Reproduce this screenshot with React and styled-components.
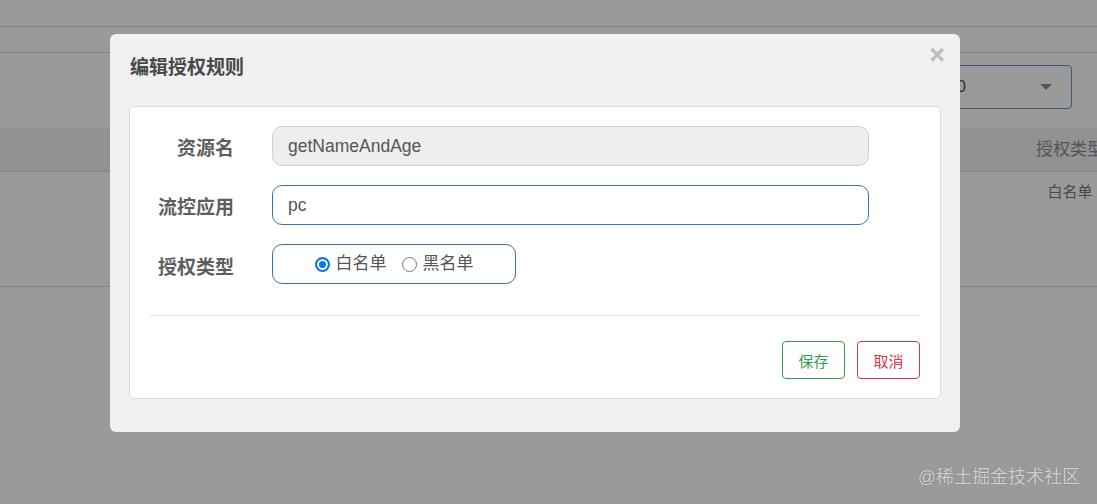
import React from 'react';
import styled, { createGlobalStyle } from 'styled-components';

const GlobalStyle = createGlobalStyle`
  html, body {
    margin: 0;
    padding: 0;
  }
  body {
    font-family: "Liberation Sans", "Noto Sans CJK SC", sans-serif;
    background: #fff;
    overflow: hidden;
  }
`;

const App = () => {
  return (
    <Page>
      <GlobalStyle />
      <TopBar />
      <SubBar />
      <FilterRow>
        <Select>
          <span>10</span>
          <Caret />
        </Select>
      </FilterRow>
      <TableHead>
        <Cell />
        <HeadCell>授权类型</HeadCell>
      </TableHead>
      <TableRow>
        <Cell />
        <RowCell>白名单</RowCell>
      </TableRow>

      <Overlay>
        <Modal>
          <Close>×</Close>
          <Title>编辑授权规则</Title>
          <Card>
            <Rows>
              <FormRow>
                <Label>资源名</Label>
                <Input disabled>getNameAndAge</Input>
              </FormRow>
              <FormRow>
                <Label>流控应用</Label>
                <Input>pc</Input>
              </FormRow>
              <FormRow>
                <Label $shift={2}>授权类型</Label>
                <RadioGroup>
                  <RadioOption>
                    <RadioDot $checked />
                    白名单
                  </RadioOption>
                  <RadioOption>
                    <RadioDot />
                    黑名单
                  </RadioOption>
                </RadioGroup>
              </FormRow>
            </Rows>
            <Divider />
            <Footer>
              <ActionButton $color="#2f9e4b">保存</ActionButton>
              <ActionButton $color="#d23a4b">取消</ActionButton>
            </Footer>
          </Card>
        </Modal>
        <Watermark>@稀土掘金技术社区</Watermark>
      </Overlay>
    </Page>
  );
};

const Page = styled.div`
  position: relative;
  width: 1097px;
  height: 504px;
  overflow: hidden;
  background: #fff;
`;

const TopBar = styled.div`
  height: 26px;
  border-bottom: 1px solid #d9d9d9;
`;

const SubBar = styled.div`
  height: 25px;
  border-bottom: 1px solid #d9d9d9;
`;

const FilterRow = styled.div`
  height: 75px;
  box-sizing: border-box;
  padding: 12px 25px 0 0;
  display: flex;
  justify-content: flex-end;
  align-items: flex-start;
`;

const Select = styled.div`
  width: 172px;
  height: 44px;
  box-sizing: border-box;
  border: 1px solid #6193c6;
  border-radius: 4px;
  display: flex;
  align-items: center;
  justify-content: space-between;
  padding: 0 19px 0 46px;
  font-size: 17px;
  color: #555;
`;

const Caret = styled.span`
  width: 0;
  height: 0;
  border-left: 6px solid transparent;
  border-right: 6px solid transparent;
  border-top: 6px solid #8f8f8f;
`;

const TableHead = styled.div`
  width: 1120px;
  height: 43px;
  background: #eef2f6;
  border-bottom: 1px solid #dcdcdc;
  display: grid;
  grid-template-columns: 1020px 100px;
  align-items: center;
`;

const TableRow = styled.div`
  width: 1120px;
  height: 114px;
  border-bottom: 1px solid #dcdcdc;
  display: grid;
  grid-template-columns: 1020px 100px;
  align-items: start;
`;

const Cell = styled.div``;

const HeadCell = styled.div`
  text-align: center;
  font-size: 17px;
  line-height: 24px;
  color: #8c8c8c;
  white-space: nowrap;
`;

const RowCell = styled.div`
  text-align: center;
  font-size: 15px;
  line-height: 20px;
  padding-top: 10px;
  color: #777;
`;

const Overlay = styled.div`
  position: absolute;
  inset: 0;
  background: rgba(0, 0, 0, 0.396);
`;

const Modal = styled.div`
  position: relative;
  width: 850px;
  box-sizing: border-box;
  margin: 34px 0 0 110px;
  padding: 21px 19px 33px 19px;
  background: #f0f0f0;
  border-radius: 6px;
`;

const Close = styled.div`
  position: absolute;
  top: 8px;
  right: 15px;
  font-family: "Liberation Sans", sans-serif;
  font-size: 27px;
  font-weight: bold;
  line-height: 1;
  color: #bdbdbd;
`;

const Title = styled.h4`
  margin: 0 0 25px 1px;
  font-size: 19px;
  line-height: 26px;
  font-weight: bold;
  color: #474747;
`;

const Card = styled.div`
  background: #fff;
  border: 1px solid #dcdcdc;
  border-radius: 5px;
  padding: 19px 20px;
`;

const Rows = styled.div`
  display: flex;
  flex-direction: column;
  gap: 19px;
`;

const FormRow = styled.div`
  display: flex;
  align-items: center;
  gap: 38px;
`;

const Label = styled.label`
  width: 84px;
  text-align: right;
  font-size: 19px;
  line-height: 26px;
  font-weight: bold;
  color: #5e5e5e;
  padding-top: ${props => 5 + (props.$shift || 0)}px;
`;

const Input = styled.div`
  width: 597px;
  height: 40px;
  box-sizing: border-box;
  padding: 0 15px;
  display: flex;
  align-items: center;
  border-radius: 10px;
  border: 1px solid ${props => (props.disabled ? '#cfcfcf' : '#3e72a5')};
  background: ${props => (props.disabled ? '#eeeeee' : '#fff')};
  font-size: 17.5px;
  color: #555;
`;

const RadioGroup = styled.div`
  width: 244px;
  height: 40px;
  box-sizing: border-box;
  border: 1px solid #3e72a5;
  border-radius: 10px;
  display: flex;
  align-items: center;
  justify-content: center;
  gap: 15px;
`;

const RadioOption = styled.span`
  display: flex;
  align-items: center;
  gap: 6px;
  font-size: 17px;
  line-height: 24px;
  color: #555;
`;

const RadioDot = styled.span`
  width: 15px;
  height: 15px;
  box-sizing: border-box;
  border-radius: 50%;
  border: ${props => (props.$checked ? '2px solid #0b74ee' : '1px solid #777')};
  background: ${props => (props.$checked ? '#0b74ee' : '#fff')};
  box-shadow: ${props => (props.$checked ? 'inset 0 0 0 2px #fff' : 'none')};
`;

const Divider = styled.div`
  margin-top: 31px;
  height: 1px;
  background: #e5e5e5;
`;

const Footer = styled.div`
  margin-top: 25px;
  display: flex;
  justify-content: flex-end;
  gap: 12px;
`;

const ActionButton = styled.button`
  width: 63px;
  height: 38px;
  box-sizing: border-box;
  padding: 0;
  border: 1px solid ${props => props.$color};
  border-radius: 4px;
  background: #fff;
  color: ${props => props.$color};
  font-family: "Noto Sans CJK SC", sans-serif;
  font-size: 15px;
`;

const Watermark = styled.div`
  position: absolute;
  right: 17px;
  bottom: 15px;
  font-size: 18px;
  line-height: 24px;
  color: rgba(255, 255, 255, 0.7);
  text-shadow: 0 0 1px rgba(0, 0, 0, 0.4);
`;

export default App;
